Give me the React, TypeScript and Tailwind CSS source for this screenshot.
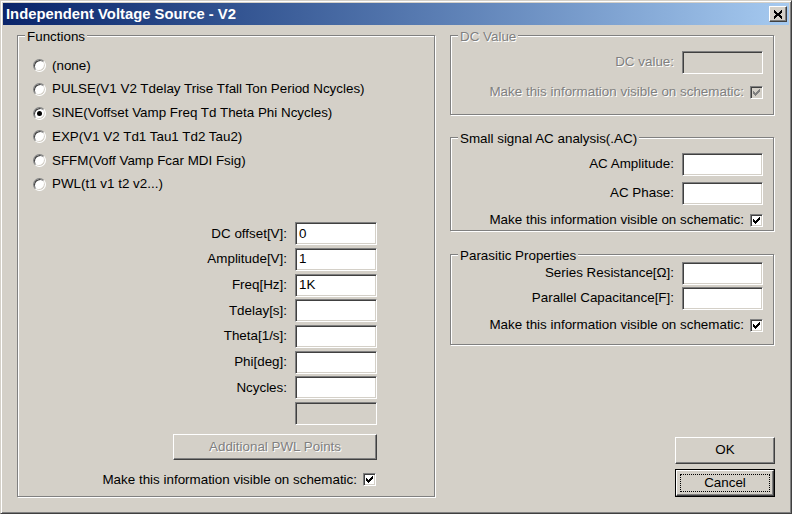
import React from "react";

const sunken =
  "border border-t-[#808080] border-l-[#808080] border-b-white border-r-white shadow-[inset_1px_1px_0_#404040,inset_-1px_-1px_0_#d4d0c8]";
const raised =
  "border border-t-white border-l-white border-b-[#404040] border-r-[#404040] shadow-[inset_-1px_-1px_0_#808080]";
const grayText = "text-[#808080] [text-shadow:1px_1px_0_#ffffff]";

function Group({
  title,
  disabled,
  className,
  children,
}: {
  title: string;
  disabled?: boolean;
  className?: string;
  children?: React.ReactNode;
}) {
  return (
    <div
      className={`relative border border-[#808080] shadow-[1px_1px_0_#ffffff,inset_1px_1px_0_#ffffff] ${className ?? ""}`}
    >
      <span
        className={`absolute -top-[7px] left-[7px] bg-[#d4d0c8] px-[2px] leading-[16px] ${disabled ? grayText : ""}`}
      >
        {title}
      </span>
      {children}
    </div>
  );
}

function Input({
  value,
  disabled,
  w = "w-[82px]",
}: {
  value?: string;
  disabled?: boolean;
  w?: string;
}) {
  return (
    <div
      className={`h-[23px] ${w} ${sunken} ${disabled ? "bg-[#d4d0c8]" : "bg-white"} flex items-center pl-[3px]`}
    >
      {value}
    </div>
  );
}

function Field({
  label,
  value,
  disabled,
  w,
}: {
  label?: string;
  value?: string;
  disabled?: boolean;
  w?: string;
}) {
  return (
    <div className="flex items-center gap-[8px]">
      {label && <span className={disabled ? grayText : ""}>{label}</span>}
      <Input value={value} disabled={disabled} w={w} />
    </div>
  );
}

function Check({ disabled }: { disabled?: boolean }) {
  return (
    <div
      className={`w-[13px] h-[13px] ${sunken} ${disabled ? "bg-[#d4d0c8]" : "bg-white"} flex items-center justify-center`}
    >
      <svg width="7" height="7" viewBox="0 0 7 7" shapeRendering="crispEdges" fill={disabled ? "#808080" : "#000"}>
        <path d="M6 0h1v1h-1zM5 1h2v1h-2zM0 2h1v1h-1zM4 2h3v1h-3zM0 3h2v1h-2zM3 3h3v1h-3zM0 4h5v1h-5zM1 5h3v1h-3zM2 6h1v1h-1z" />
      </svg>
    </div>
  );
}

function VisibleRow({ disabled }: { disabled?: boolean }) {
  return (
    <div className="flex items-center gap-[6px]">
      <span className={disabled ? grayText : ""}>Make this information visible on schematic:</span>
      <Check disabled={disabled} />
    </div>
  );
}

function Radio({ label, checked }: { label: string; checked?: boolean }) {
  return (
    <div className="flex items-center h-[23.7px] gap-[6px]">
      <div
        className={`w-[13px] h-[13px] rounded-full border border-t-[#808080] border-l-[#808080] border-b-white border-r-white shadow-[inset_1px_1px_0_#404040,inset_-1px_-1px_0_#d4d0c8] bg-white flex items-center justify-center`}
      >
        {checked && <div className="w-[5px] h-[5px] rounded-full bg-black" />}
      </div>
      <span>{label}</span>
    </div>
  );
}

const functions = [
  { label: "(none)" },
  { label: "PULSE(V1 V2 Tdelay Trise Tfall Ton Period Ncycles)" },
  { label: "SINE(Voffset Vamp Freq Td Theta Phi Ncycles)", checked: true },
  { label: "EXP(V1 V2 Td1 Tau1 Td2 Tau2)" },
  { label: "SFFM(Voff Vamp Fcar MDI Fsig)" },
  { label: "PWL(t1 v1 t2 v2...)" },
];

const sineFields = [
  { label: "DC offset[V]:", value: "0" },
  { label: "Amplitude[V]:", value: "1" },
  { label: "Freq[Hz]:", value: "1K" },
  { label: "Tdelay[s]:" },
  { label: "Theta[1/s]:" },
  { label: "Phi[deg]:" },
  { label: "Ncycles:" },
];

export default function App() {
  return (
    <div className="w-[792px] h-[514px] bg-[#d4d0c8] border border-t-[#d4d0c8] border-l-[#d4d0c8] border-b-[#404040] border-r-[#404040] shadow-[inset_1px_1px_0_#ffffff,inset_-1px_-1px_0_#808080] p-[2px] flex flex-col font-['Liberation_Sans',Arial,sans-serif] text-[13.4px] text-black overflow-hidden">
      {/* title bar */}
      <div className="h-[22px] shrink-0 flex items-center justify-between pl-[3px] pr-[2px] bg-linear-to-r from-[#0a246a] to-[#a6caf0]">
        <span className="text-white font-bold text-[14.8px] leading-none">Independent Voltage Source - V2</span>
        <div className={`w-[18px] h-[16px] bg-[#d4d0c8] ${raised} flex items-center justify-center`}>
          <svg width="10" height="9" viewBox="0 0 10 9" shapeRendering="crispEdges">
            <path d="M1 1L9 8M9 1L1 8" stroke="#000" strokeWidth="2" />
          </svg>
        </div>
      </div>

      <div className="flex flex-1 pl-[14px] pt-[10px] pb-[15px] gap-[15px]">
        {/* left: functions */}
        <Group title="Functions" className="w-[418px] h-[462px] flex flex-col">
          <div className="flex flex-col pl-[15px] pt-[18px]">
            {functions.map((f) => (
              <Radio key={f.label} label={f.label} checked={f.checked} />
            ))}
          </div>
          <div className="flex flex-col items-end pr-[57px] mt-[26px]">
            <div className="flex flex-col items-end gap-[2.7px]">
              {sineFields.map((f) => (
                <Field key={f.label} label={f.label} value={f.value} />
              ))}
              <Field disabled />
            </div>
            <div
              className={`mt-[9px] w-[204px] h-[26px] ${raised} flex items-center justify-center ${grayText}`}
            >
              Additional PWL Points
            </div>
            <div className="mt-[10px] mr-[1px]">
              <VisibleRow />
            </div>
          </div>
        </Group>

        {/* right column */}
        <div className="w-[325px] flex flex-col">
          <Group title="DC Value" disabled className="w-[324px] h-[80px] flex flex-col items-end pr-[10px] pt-[15px]">
            <Field label="DC value:" disabled w="w-[81px]" />
            <div className="mt-[8px]">
              <VisibleRow disabled />
            </div>
          </Group>

          <Group
            title="Small signal AC analysis(.AC)"
            className="mt-[22px] w-[324px] h-[94px] flex flex-col items-end pr-[10px] pt-[15px]"
          >
            <Field label="AC Amplitude:" w="w-[81px]" />
            <div className="mt-[6px]">
              <Field label="AC Phase:" w="w-[81px]" />
            </div>
            <div className="mt-[5px]">
              <VisibleRow />
            </div>
          </Group>

          <Group
            title="Parasitic Properties"
            className="mt-[23px] w-[324px] h-[91px] flex flex-col items-end pr-[10px] pt-[7px]"
          >
            <Field label="Series Resistance[Ω]:" w="w-[81px]" />
            <div className="mt-[2px]">
              <Field label="Parallel Capacitance[F]:" w="w-[81px]" />
            </div>
            <div className="mt-[5px]">
              <VisibleRow />
            </div>
          </Group>

          <div className="flex-1" />

          <div className={`self-end w-[100px] h-[27px] ${raised} flex items-center justify-center`}>OK</div>
          <div className="self-end mt-[5px] w-[100px] h-[28px] border border-black">
            <div className={`w-full h-full ${raised} flex items-center justify-center p-[3px]`}>
              <div className="w-full h-full border border-dotted border-black flex items-center justify-center">
                Cancel
              </div>
            </div>
          </div>
        </div>
      </div>
    </div>
  );
}
